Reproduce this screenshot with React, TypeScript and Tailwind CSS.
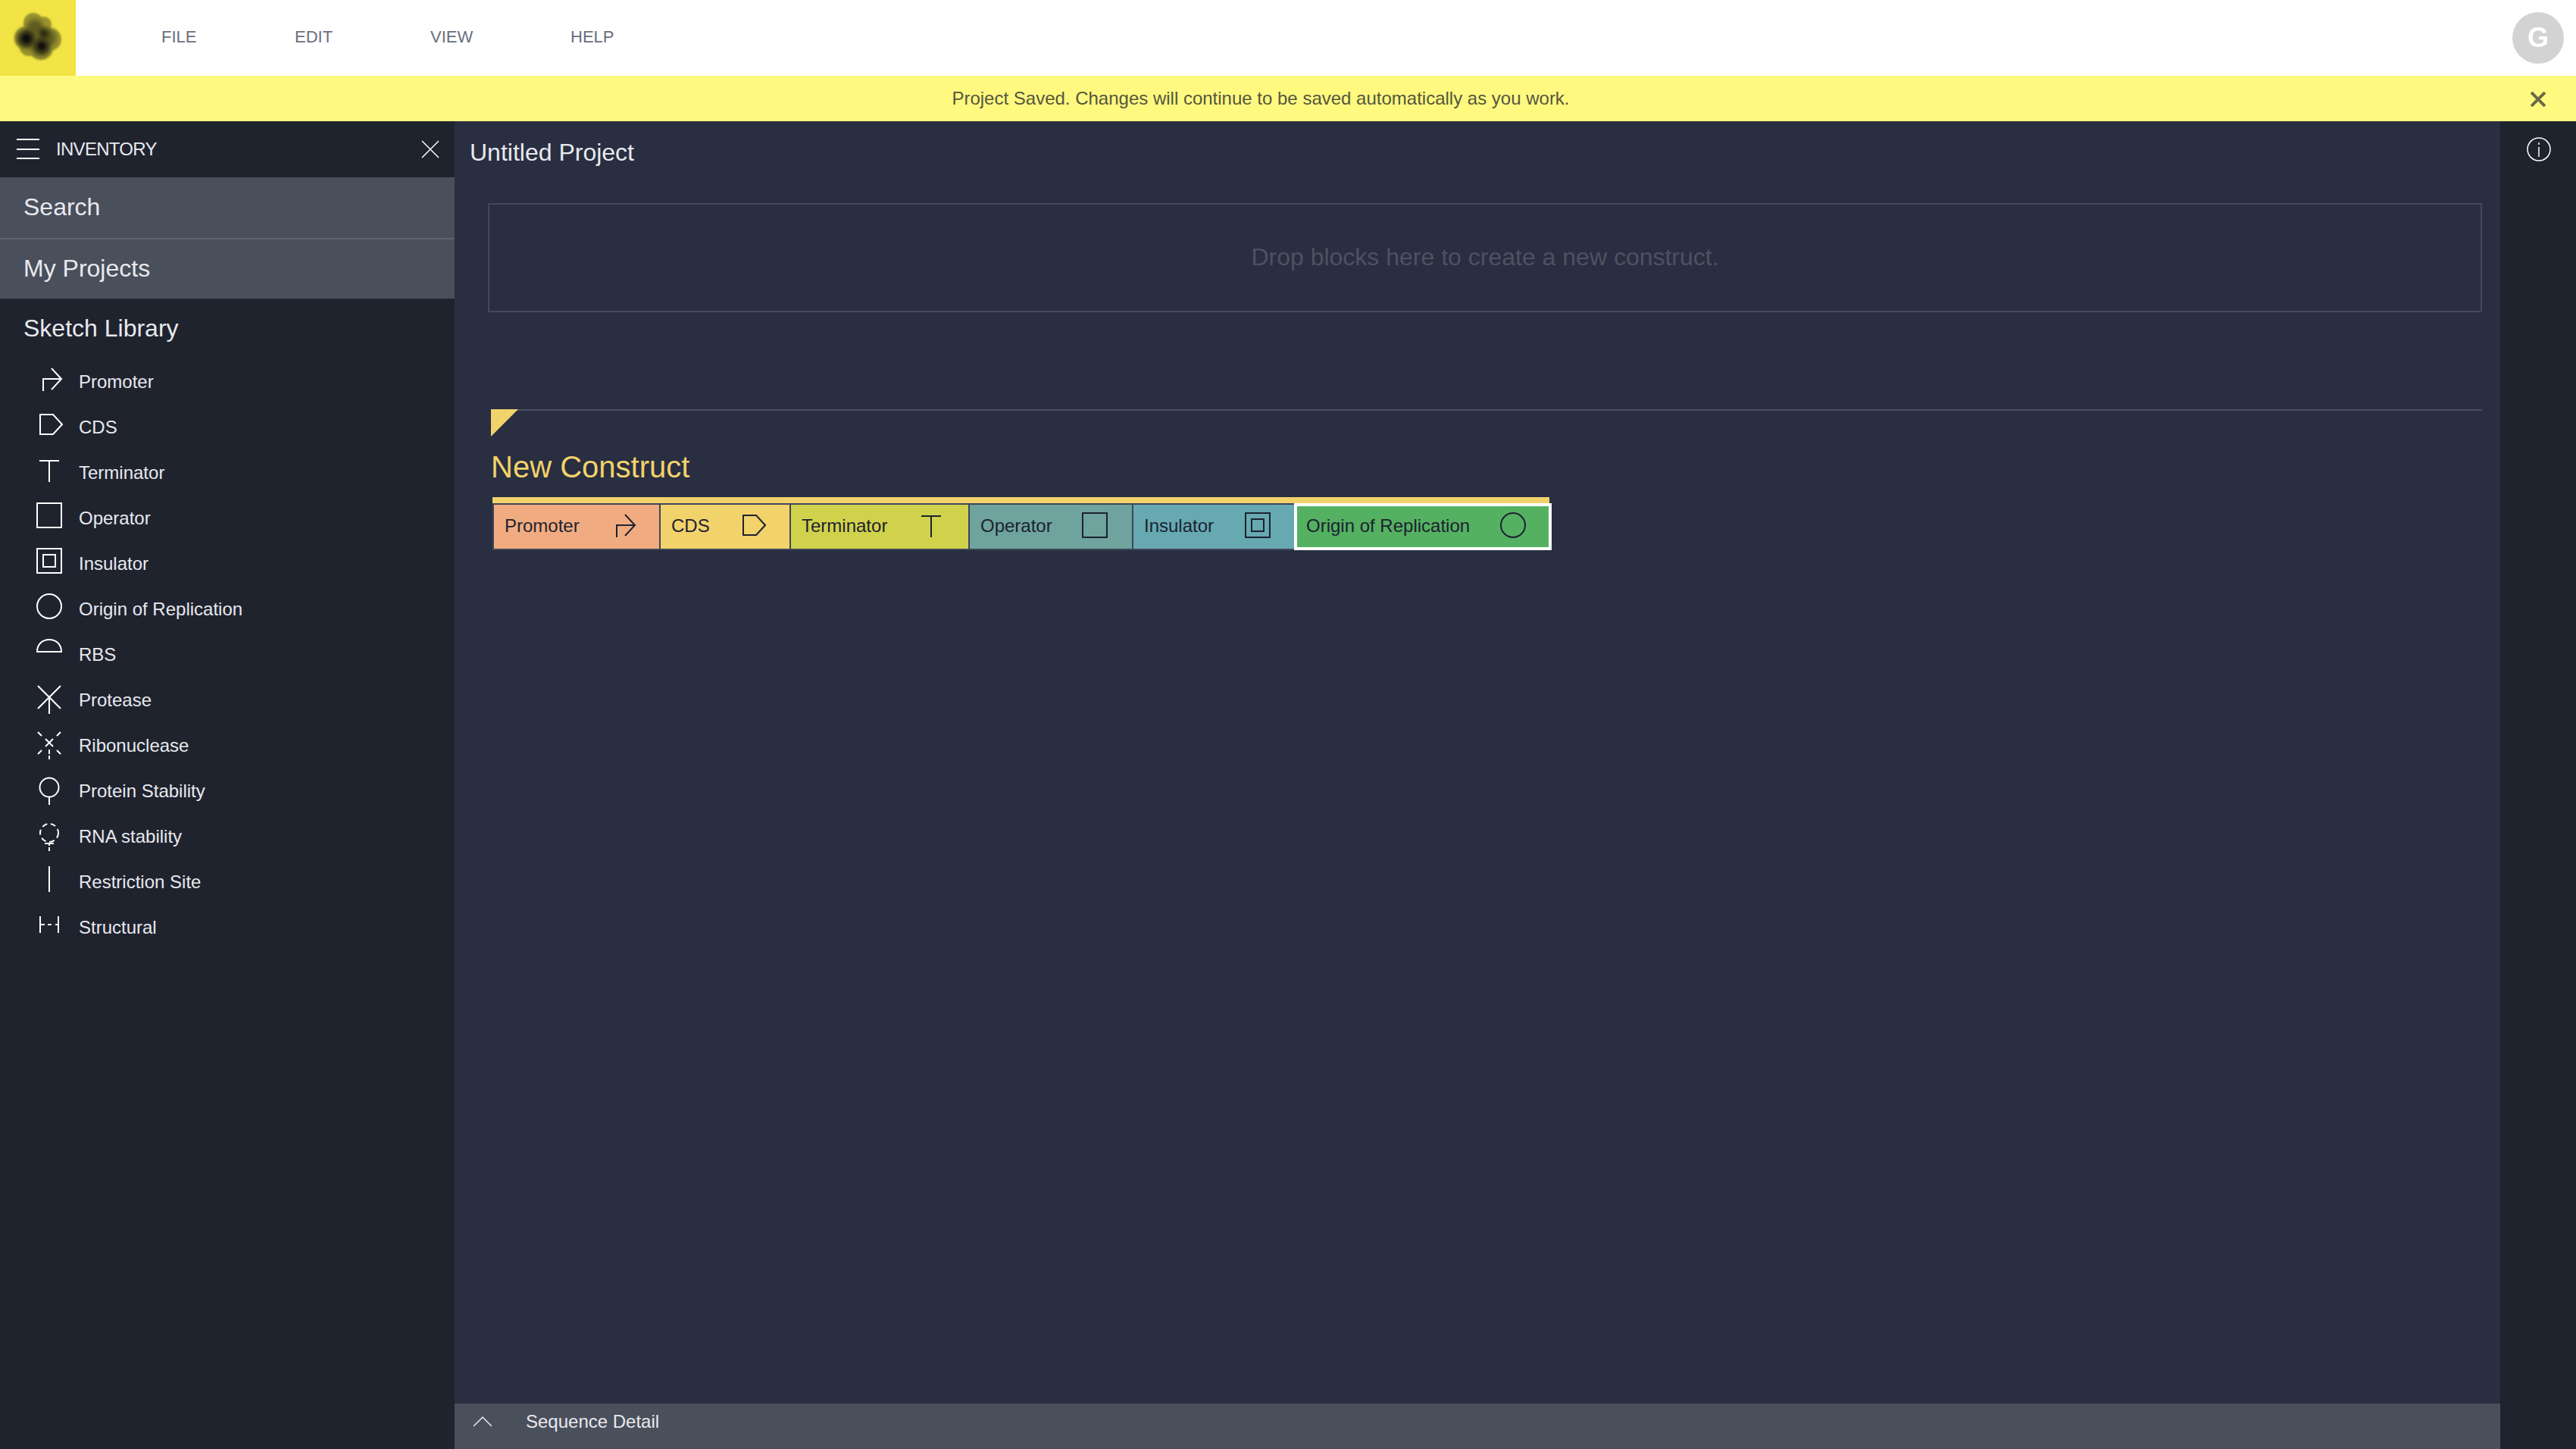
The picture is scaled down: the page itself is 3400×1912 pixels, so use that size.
const sans = "font-['Liberation_Sans',Arial,sans-serif]"

function Glyph({ kind, className }: { kind: string; className?: string }) {
  const base = { fill: 'none', stroke: 'currentColor', strokeWidth: 2 }
  return (
    <svg width="36" height="48" viewBox="0 0 36 48" className={className} {...base}>
      {kind === 'promoter' && <path d="M10 38V22H34M21 8L34 22L21 36" />}
      {kind === 'cds' && <path d="M6 9H23L35 22L23 35H6Z" />}
      {kind === 'terminator' && <path d="M5 10H31M18 10V38" />}
      {kind === 'operator' && <rect x="2" y="6" width="32" height="32" />}
      {kind === 'insulator' && (
        <>
          <rect x="2" y="6" width="32" height="32" />
          <rect x="10" y="14" width="16" height="16" />
        </>
      )}
      {kind === 'origin' && <circle cx="18" cy="22" r="16" />}
      {kind === 'rbs' && <path d="M2 22C2 12 9 6 18 6S34 12 34 22Z" />}
      {kind === 'protease' && <path d="M3 7L33 37M33 7L3 37M18 22V44" />}
      {kind === 'ribonuclease' && (
        <path d="M3 8L8 13M33 8L28 13M13 17L23 27M23 17L13 27M3 37L8 32M33 37L28 32M18 31V37M18 39V44" />
      )}
      {kind === 'protein' && (
        <>
          <circle cx="18" cy="21" r="12.5" />
          <path d="M18 34V44" />
        </>
      )}
      {kind === 'rna' && (
        <>
          <circle cx="18" cy="21" r="12" strokeDasharray="7 4.6" />
          <path d="M12 35H24M18 35V38M18 40V45" />
        </>
      )}
      {kind === 'site' && <path d="M18 5V39" />}
      {kind === 'structural' && <path d="M6 11V33M30 11V33M6 22H12M16 22H21M26 22H30" />}
    </svg>
  )
}

const sketchItems = [
  { label: 'Promoter', kind: 'promoter' },
  { label: 'CDS', kind: 'cds' },
  { label: 'Terminator', kind: 'terminator' },
  { label: 'Operator', kind: 'operator' },
  { label: 'Insulator', kind: 'insulator' },
  { label: 'Origin of Replication', kind: 'origin' },
  { label: 'RBS', kind: 'rbs' },
  { label: 'Protease', kind: 'protease' },
  { label: 'Ribonuclease', kind: 'ribonuclease' },
  { label: 'Protein Stability', kind: 'protein' },
  { label: 'RNA stability', kind: 'rna' },
  { label: 'Restriction Site', kind: 'site' },
  { label: 'Structural', kind: 'structural' },
]

const blocks = [
  { label: 'Promoter', kind: 'promoter', className: 'w-[218px] pr-[30px] bg-[#f0ac80]' },
  { label: 'CDS', kind: 'cds', className: 'w-[170px] pr-[31px] bg-[#f2d26b]' },
  { label: 'Terminator', kind: 'terminator', className: 'w-[234px] pr-[31px] bg-[#d1d24b]' },
  { label: 'Operator', kind: 'operator', className: 'w-[214px] pr-[31px] bg-[#6ea39e]' },
  { label: 'Insulator', kind: 'insulator', className: 'w-[212px] pr-[30px] bg-[#66a9b1]' },
]

function Logo() {
  return (
    <svg width="100" height="100" viewBox="0 0 100 100">
      <defs>
        <filter id="soft" x="-20%" y="-20%" width="140%" height="140%">
          <feGaussianBlur stdDeviation="1" />
        </filter>
        <filter id="softer" x="-30%" y="-30%" width="160%" height="160%">
          <feGaussianBlur stdDeviation="3" />
        </filter>
      </defs>
      <g fill="#9a952d" filter="url(#soft)">
        <circle cx="44" cy="30" r="13" />
        <circle cx="58" cy="32" r="10" />
        <circle cx="34" cy="50" r="15" />
        <circle cx="66" cy="52" r="15" />
        <circle cx="54" cy="63" r="16" />
        <circle cx="38" cy="62" r="12" />
      </g>
      <g fill="#5e5b20" filter="url(#softer)">
        <circle cx="46" cy="36" r="11" />
        <circle cx="35" cy="51" r="13" />
        <circle cx="62" cy="50" r="12" />
        <circle cx="54" cy="62" r="13" />
      </g>
      <circle cx="35" cy="51" r="9" fill="#0f0f08" filter="url(#softer)" />
      <circle cx="55" cy="61" r="8" fill="#0f0f08" filter="url(#softer)" />
      <circle cx="58" cy="44" r="6" fill="#24230e" filter="url(#softer)" />
    </svg>
  )
}

export default function App() {
  return (
    <div className={`${sans} flex h-[1912px] w-[3400px] flex-col overflow-hidden bg-[#292e41]`}>
      {/* Top bar */}
      <header className="flex h-[100px] shrink-0 items-center bg-white pr-4">
        <div className="h-[100px] w-[100px] bg-[#f2e445]">
          <Logo />
        </div>
        <nav className="flex pb-[4px] text-[22px] text-[#6a6e80]">
          <span className="ml-[113px] w-[176px]">FILE</span>
          <span className="w-[179px]">EDIT</span>
          <span className="w-[185px]">VIEW</span>
          <span>HELP</span>
        </nav>
        <div className="ml-auto flex h-[68px] w-[68px] items-center justify-center rounded-full bg-[#d3d3d3] text-[36px] font-bold text-white">
          G
        </div>
      </header>

      {/* Save banner */}
      <div className="relative flex h-[60px] shrink-0 items-center justify-center bg-[#fff97f] pr-[72px] text-[24px] text-[#55563f]">
        Project Saved. Changes will continue to be saved automatically as you work.
        <svg className="absolute right-[40px] top-[21px]" width="20" height="20" viewBox="0 0 20 20" stroke="#6b6a45" strokeWidth="4">
          <path d="M1 1L19 19M19 1L1 19" />
        </svg>
      </div>

      <div className="flex min-h-0 flex-1">
        {/* Inventory */}
        <aside className="flex w-[600px] shrink-0 flex-col bg-[#1f232e] text-[#e8e9ee]">
          <div className="flex h-[74px] shrink-0 items-center pl-[22px] pr-[20px] text-[24px]">
            <svg width="30" height="28" viewBox="0 0 30 28" stroke="#fff" strokeWidth="2">
              <path d="M0 1H30M0 14H30M0 26H30" />
            </svg>
            <span className="ml-[22px] tracking-[-0.7px]">INVENTORY</span>
            <svg className="ml-auto" width="24" height="24" viewBox="0 0 24 24" stroke="#fff" strokeWidth="1.5" fill="none">
              <path d="M1 1L23 23M23 1L1 23" />
            </svg>
          </div>
          <div className="flex h-[82px] items-center border-b-2 border-[#5e6270] bg-[#4a4f5c] pb-[2px] pl-[31px] text-[32px]">Search</div>
          <div className="flex h-[78px] items-center bg-[#4a4f5c] pb-[2px] pl-[31px] text-[32px]">My Projects</div>
          <div className="flex h-[78px] items-center pl-[31px] text-[32px]">Sketch Library</div>
          <ul className="flex flex-col pt-[2px]">
            {sketchItems.map((item) => (
              <li key={item.label} className="flex h-[60px] items-center text-[24px]">
                <Glyph kind={item.kind} className="ml-[47px] -mt-[4px] shrink-0 overflow-visible text-white" />
                <span className="ml-[21px]">{item.label}</span>
              </li>
            ))}
          </ul>
        </aside>

        {/* Canvas */}
        <main className="flex min-w-0 flex-1 flex-col">
          <div className="min-h-0 flex-1 pl-[20px] pr-[24px]">
            <h1 className="flex h-[80px] items-center pt-[1px] text-[32px] text-[#e8e9ee]">Untitled Project</h1>
            <div className="mt-[28px] ml-[24px] flex h-[144px] items-center justify-center border-2 border-[#444957] pb-[2px] text-[32px] text-[#4d5262]">
              Drop blocks here to create a new construct.
            </div>

            <section className="mt-[128px] ml-[28px]">
              <div className="relative h-[36px] border-t-2 border-[#4c5060]">
                <div className="absolute -top-[2px] left-0 h-0 w-0 border-t-[36px] border-r-[36px] border-t-[#f2d26b] border-r-transparent" />
              </div>
              <h2 className="flex h-[80px] items-center text-[40px] text-[#f2d26b]">New Construct</h2>
              <div className="ml-[2px] w-[1395px] border-t-[8px] border-[#f2d26b]">
                <div className="flex h-[62px] w-[1398px] items-stretch bg-[#3f4658] py-[2px] pl-[2px]">
                  {blocks.map((block) => (
                    <div key={block.label} className={`${block.className} mr-[2px] flex shrink-0 items-center justify-between pl-[14px] text-[24px] text-[#1d2230]`}>
                      <span className="pb-[3px]">{block.label}</span>
                      <Glyph kind={block.kind} />
                    </div>
                  ))}
                  <div className="-my-[2px] -ml-[2px] flex w-[340px] shrink-0 items-center justify-between border-4 border-white bg-[#54b162] pl-[12px] pr-[29px] text-[24px] text-[#1d2230]">
                    <span className="pb-[3px]">Origin of Replication</span>
                    <Glyph kind="origin" />
                  </div>
                </div>
              </div>
            </section>
          </div>

          {/* Sequence detail */}
          <div className="flex h-[60px] shrink-0 items-center bg-[#4a4f5c] pb-[12px] pl-[25px] text-[24px] text-[#e8e9ee]">
            <svg width="24" height="14" viewBox="0 0 24 14" stroke="#e8e9ee" strokeWidth="1.5" fill="none">
              <path d="M0 13L12 1L24 13" />
            </svg>
            <span className="ml-[45px]">Sequence Detail</span>
          </div>
        </main>

        {/* Right rail */}
        <aside className="flex w-[100px] shrink-0 justify-center bg-[#1f232e] pt-[21px]">
          <svg className="ml-[2px]" width="32" height="32" viewBox="0 0 32 32" fill="none" stroke="#fff" strokeWidth="1.5">
            <circle cx="16" cy="16" r="15" />
            <path d="M16 13V26M16 7V10" />
          </svg>
        </aside>
      </div>
    </div>
  )
}
